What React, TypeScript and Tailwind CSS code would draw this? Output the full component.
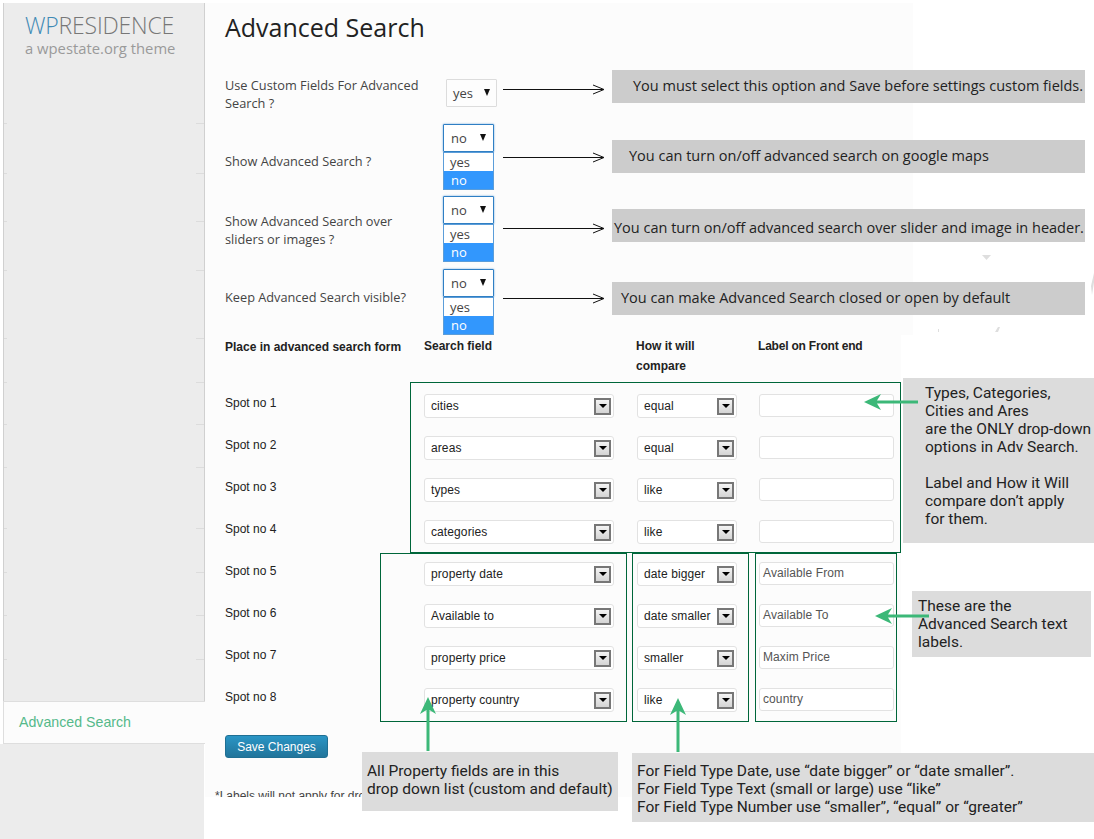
const sans = "font-['Liberation_Sans',Arial,sans-serif]";
const open = "font-['Open_Sans',sans-serif]";
const roboto = "font-['Roboto',sans-serif]";

const sidebarTicks = [123, 173, 221, 270, 338, 382, 424, 467, 528, 572, 615, 659];

const settings = [
  { label: "Use Custom Fields For Advanced Search ?", open: false, rowClass: "h-[48px]", labelClass: "pt-0", selectClass: "ml-[3px] mt-[3px]" },
  { label: "Show Advanced Search ?", open: true, rowClass: "h-[72px]", labelClass: "pt-[28px]", selectClass: "" },
  { label: "Show Advanced Search over sliders or images ?", open: true, rowClass: "h-[73px]", labelClass: "pt-[16px]", selectClass: "" },
  { label: "Keep Advanced Search visible?", open: true, rowClass: "h-[67px]", labelClass: "pt-[19px]", selectClass: "" },
];

const spots = [
  { field: "cities", compare: "equal", label: "" },
  { field: "areas", compare: "equal", label: "" },
  { field: "types", compare: "like", label: "" },
  { field: "categories", compare: "like", label: "" },
  { field: "property date", compare: "date bigger", label: "Available From" },
  { field: "Available to", compare: "date smaller", label: "Available To" },
  { field: "property price", compare: "smaller", label: "Maxim Price" },
  { field: "property country", compare: "like", label: "country" },
];

const notes = [
  { text: "You must select this option and Save before settings custom fields.", box: "top-[70px] h-[33px] pl-[21px] pb-[1px]", arrow: "top-[84px]" },
  { text: "You can turn on/off advanced search on google maps", box: "top-[140px] h-[33px] pl-[17px] pb-[1px]", arrow: "top-[152px]" },
  { text: "You can turn on/off advanced search over slider and image in header.", box: "top-[209px] h-[33px] pl-[2px] pt-[4px]", arrow: "top-[223px]" },
  { text: "You can make Advanced Search closed or open by default", box: "top-[282px] h-[33px] pl-[9px] pb-[1px]", arrow: "top-[293px]" },
];

function BlackArrow({ className }: { className: string }) {
  return (
    <svg className={`absolute left-[503px] ${className}`} width="102" height="11" viewBox="0 0 102 11" fill="none" stroke="#111" strokeWidth="1">
      <path d="M0 5.5H100M90 1l11 4.5L90 10" />
    </svg>
  );
}

function Caret() {
  return <span className="mb-[2px] h-0 w-0 border-x-[3px] border-t-[7px] border-x-transparent border-t-[#111]" />;
}

function AdminSelect({ value }: { value: string }) {
  return (
    <div className="flex h-[28px] w-[51px] items-center justify-between rounded-[1px] border border-[#dcdcdc] bg-[#fdfdfd] pl-[6px] pr-[6px]">
      <span className={`${open} pt-[2px] text-[13px] text-[#444]`}>{value}</span>
      <Caret />
    </div>
  );
}

function OpenSelect() {
  return (
    <div className="w-[51px]">
      <div className="flex h-[28px] items-center justify-between rounded-[1px] border border-[#2f7fc4] bg-white pl-[7px] pr-[7px] shadow-[0_0_2px_#5b9dd9]">
        <span className={`${open} pt-[2px] text-[13px] text-[#444]`}>no</span>
        <Caret />
      </div>
      <div className={`${open} border border-[#5b9dd9] bg-white text-[13px] leading-[18px]`}>
        <div className="pl-[6px] text-[#444]">yes</div>
        <div className="bg-[#3297fd] pl-[7px] text-white">no</div>
      </div>
    </div>
  );
}

function SpotSelect({ value, className }: { value: string; className: string }) {
  return (
    <div className={`flex h-[24px] items-center justify-between rounded-[3px] border border-[#e2e2e2] bg-white pl-[6px] pr-[2px] ${className}`}>
      <span className={`${sans} text-[12px] tracking-[0.1px] text-[#222]`}>{value}</span>
      <span className="flex h-[17px] w-[17px] items-center justify-center border-2 border-[#777] bg-gradient-to-b from-[#f4f4f4] to-[#d4d4d4]">
        <span className="h-0 w-0 border-x-[4px] border-t-[4px] border-x-transparent border-t-black" />
      </span>
    </div>
  );
}

function GreenArrow({ className, dir }: { className: string; dir: "left" | "up" }) {
  if (dir === "left") {
    return (
      <svg className={`absolute ${className}`} width="54" height="16" viewBox="0 0 54 16" fill="#3cb878">
        <path d="M0 8L17 0L13 6.5H54V9.5H13L17 16Z" />
      </svg>
    );
  }
  return (
    <svg className={`absolute ${className}`} width="16" height="54" viewBox="0 0 16 54" fill="#3cb878">
      <path d="M8 0L16 17L9.5 13V54H6.5V13L0 17Z" />
    </svg>
  );
}

export default function App() {
  return (
    <div className="relative h-[839px] w-[1094px] overflow-hidden bg-white">
      <div className="flex pt-[3px]">
        <aside className="flex h-[836px] w-[205px] flex-col">
          <div className="ml-[3px] flex h-[698px] flex-col border-l border-r border-[#d0d0d0] bg-[#ececec] pl-[21px] pt-[9px]">
            <div className={`${open} text-[23px] font-light leading-[27px] tracking-[-0.2px] text-[#777]`}>
              <span className="text-[#3f8ab5]">WP</span>RESIDENCE
            </div>
            <div className={`${open} mt-[1px] text-[14.8px] leading-[16px] text-[#9a9a9a]`}>a wpestate.org theme</div>
          </div>
          <div className="ml-[3px] flex h-[43px] items-center border-y border-l border-[#dedede] bg-[#fcfcfc] pl-[15px]">
            <span className={`${sans} text-[14.2px] text-[#55b98a]`}>Advanced Search</span>
          </div>
          <div className="mr-[1px] flex-1 bg-[#ececec]" />
        </aside>

        <main className="h-[794px] w-[708px] overflow-hidden bg-[#fcfcfc] pl-[20px]">
          <h1 className={`${open} pt-[6px] text-[25px] leading-[36px] text-[#222]`}>Advanced Search</h1>

          <div className="pt-[31px]">
            {settings.map((row) => (
              <div key={row.label} className={`flex ${row.rowClass}`}>
                <div className={`${open} w-[218px] shrink-0 pr-[10px] text-[12.75px] leading-[18px] text-[#444] ${row.labelClass}`}>
                  {row.label}
                </div>
                <div className={`relative z-10 ${row.selectClass}`}>
                  {row.open ? <OpenSelect /> : <AdminSelect value="yes" />}
                </div>
              </div>
            ))}
          </div>

          <div className={`${sans} grid h-[58px] grid-cols-[199px_212px_122px_1fr] text-[12px] font-bold leading-[20px] text-[#222]`}>
            <div className="pt-[1px]">Place in advanced search form</div>
            <div>Search field</div>
            <div>
              How it will
              <br />
              compare
            </div>
            <div className="tracking-[-0.2px]">Label on Front end</div>
          </div>

          {spots.map((spot, index) => (
            <div key={index} className="grid h-[42px] grid-cols-[199px_213px_122px_1fr] items-start">
              <div className={`${sans} text-[12px] leading-[18px] text-[#222]`}>Spot no {index + 1}</div>
              <SpotSelect value={spot.field} className="w-[190px]" />
              <SpotSelect value={spot.compare} className="w-[100px]" />
              <div className={`${sans} flex h-[23px] w-[135px] items-center rounded-[3px] border border-[#e2e2e2] bg-white pb-[1px] pl-[3px] text-[12px] tracking-[0.1px] text-[#555]`}>
                {spot.label}
              </div>
            </div>
          ))}

          <button
            type="button"
            className={`${sans} mt-[5px] h-[23px] w-[103px] rounded-[3px] border border-[#1f6f93] bg-gradient-to-b from-[#2a95c5] to-[#21759b] text-[12px] text-white`}
          >
            Save Changes
          </button>

          <p className={`${sans} -ml-[10px] mt-[30px] whitespace-nowrap text-[12px] leading-[16px] text-[#444]`}>
            *Labels will not apply for dropdown fields
          </p>
        </main>
      </div>

      {/* leftover rules on the sidebar edges */}
      {sidebarTicks.map((y) => (
        <div key={y} style={{ top: y }} className="absolute left-[4px] flex h-px w-[200px] justify-between">
          <span className="w-[3px] bg-[#dcdcdc]" />
          <span className="w-[8px] bg-[#dcdcdc]" />
        </div>
      ))}

      {/* the screenshot is cropped narrower below the notes, with scraps left on the white */}
      <div className="absolute left-[901px] top-[335px] h-[462px] w-[12px] bg-white" />
      <svg className="absolute left-[930px] top-[250px]" width="164" height="85" viewBox="0 0 164 85" fill="#dedede">
        <path d="M52 5H61L56.5 10Z" />
        <path d="M65 82L68 77H70L68 82Z" />
        <path d="M8 82V79H9V82Z" />
        <path d="M161 36L164 23V32L162 45Z" />
      </svg>

      {/* annotations drawn over the screenshot */}
      {notes.map((note) => (
        <div key={note.text}>
          <BlackArrow className={note.arrow} />
          <div className={`absolute left-[612px] flex w-[473px] items-center whitespace-nowrap bg-[#cccccc] text-[14.5px] text-[#222] ${open} ${note.box}`}>
            {note.text}
          </div>
        </div>
      ))}

      <div className="pointer-events-none absolute left-[410px] top-[382px] h-[171px] w-[491px] border border-[#00663a]" />
      <div className="pointer-events-none absolute left-[380px] top-[553px] h-[169px] w-[247px] border border-[#00663a]" />
      <div className="pointer-events-none absolute left-[632px] top-[553px] h-[169px] w-[117px] border border-[#00663a]" />
      <div className="pointer-events-none absolute left-[755px] top-[553px] h-[169px] w-[142px] border border-[#00663a]" />

      <div className={`${roboto} absolute left-[903px] top-[378px] h-[165px] w-[191px] bg-[#dcdcdc] pl-[22px] pt-[6px] text-[15.5px] leading-[18px] text-[#222]`}>
        Types, Categories,
        <br />
        Cities and Ares
        <br />
        are the ONLY drop-down
        <br />
        options in Adv Search.
        <br />
        <br />
        Label and How it Will
        <br />
        compare don’t apply
        <br />
        for them.
      </div>
      <div className={`${roboto} absolute left-[912px] top-[591px] h-[66px] w-[179px] bg-[#dcdcdc] pl-[6px] pt-[6px] text-[15.5px] leading-[18px] text-[#222]`}>
        These are the
        <br />
        Advanced Search text
        <br />
        labels.
      </div>
      <div className={`${roboto} absolute left-[362px] top-[752px] h-[59px] w-[256px] bg-[#dcdcdc] pl-[5px] pt-[10px] text-[15.5px] leading-[18px] text-[#222]`}>
        All Property fields are in this
        <br />
        drop down list (custom and default)
      </div>
      <div className={`${roboto} absolute left-[632px] top-[753px] h-[69px] w-[462px] bg-[#dcdcdc] pl-[5px] pt-[9px] text-[15.5px] leading-[18px] text-[#222]`}>
        For Field Type Date, use “date bigger” or “date smaller”.
        <br />
        For Field Type Text (small or large) use “like”
        <br />
        For Field Type Number use “smaller”, “equal” or “greater”
      </div>

      <GreenArrow dir="left" className="left-[864px] top-[394px]" />
      <GreenArrow dir="left" className="left-[875px] top-[608px]" />
      <GreenArrow dir="up" className="left-[420px] top-[697px]" />
      <GreenArrow dir="up" className="left-[670px] top-[698px]" />
    </div>
  );
}
